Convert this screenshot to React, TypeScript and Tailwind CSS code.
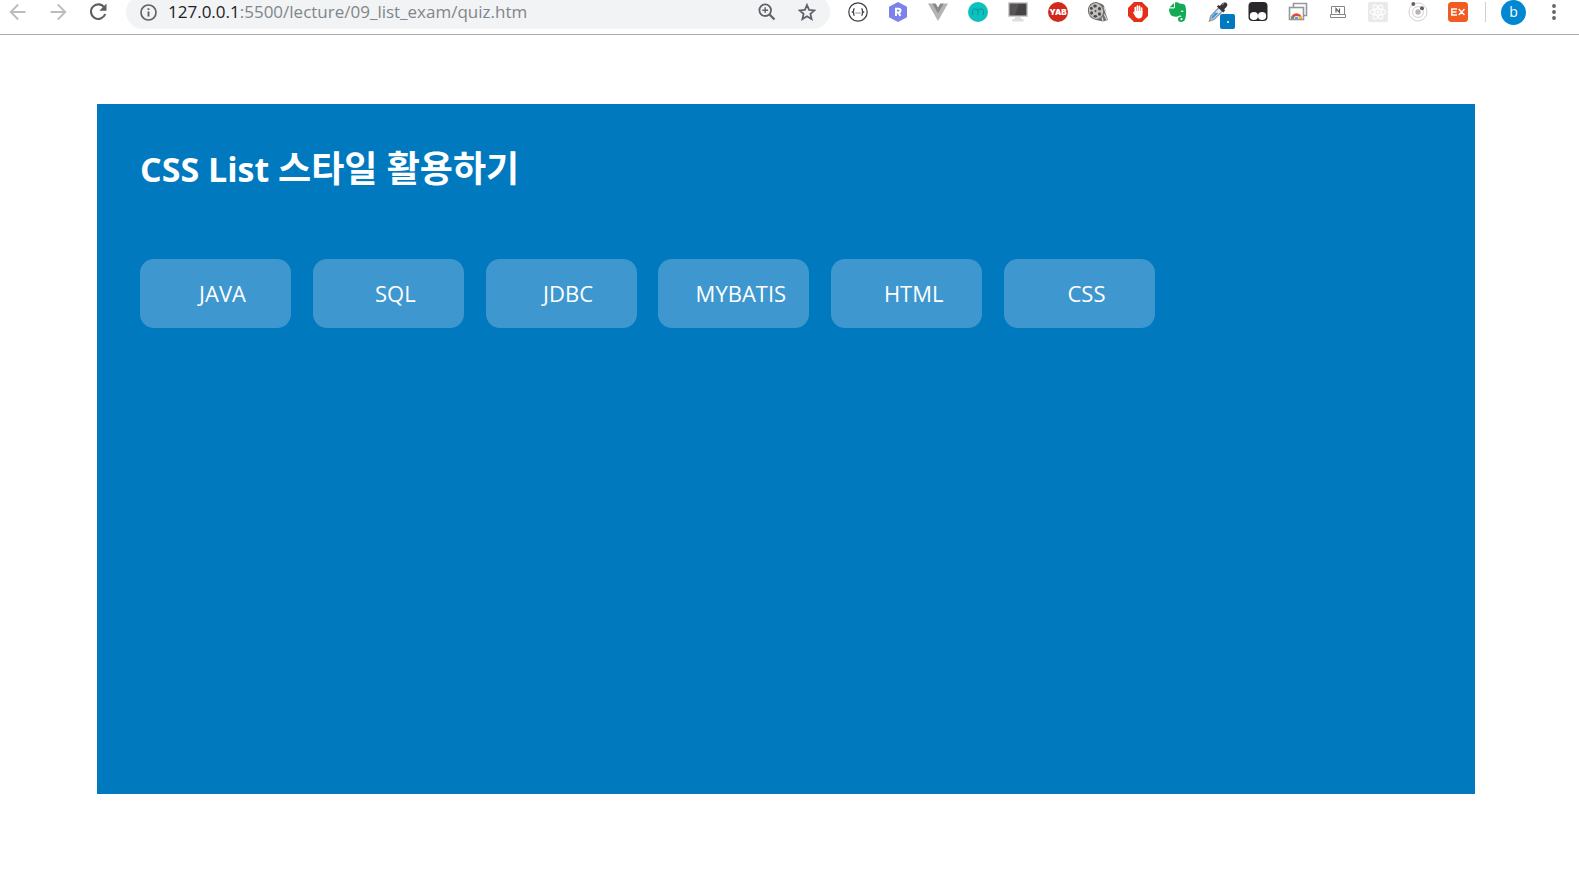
import type { ReactNode } from "react";

const topics = ["JAVA", "SQL", "JDBC", "MYBATIS", "HTML", "CSS"];

function ToolButton({ label, children }: { label: string; children: ReactNode }) {
  return (
    <button type="button" aria-label={label} className="relative flex h-5 w-10 shrink-0 items-center justify-center">
      {children}
    </button>
  );
}

const extensions: { name: string; icon: ReactNode }[] = [
  {
    name: "JSON viewer",
    icon: (
      <svg width="20" height="20" viewBox="0 0 20 20" fill="none" stroke="#3a3c40">
        <circle cx="10" cy="10" r="9.2" strokeWidth="1.2" />
        <path d="M6.6 6.6C5.2 6.6 5.9 8.200 5.500 9.300L4.500 10l1 .7c.4 1.100-.3 2.700 1.100 2.700M13.400 6.600c1.400 0 .7 1.600 1.100 2.700l1 .7-1 .7c-.4 1.100.3 2.700-1.100 2.700" strokeWidth="1.300" />
        <path d="M7.600 11h1M9.500 11h1M11.400 11h1" strokeWidth="1" />
      </svg>
    ),
  },
  {
    name: "Hexagon R",
    icon: (
      <svg width="20" height="20" viewBox="0 0 20 20">
        <path d="M10 0l9 4.8v10.4L10 20l-9-4.8V4.8z" fill="#7b83eb" />
        <path d="M8 14V6.7h2.6a1.9 1.9 0 010 3.8H8M10.4 10.5l2 3.5" fill="none" stroke="#fff" strokeWidth="1.9" />
      </svg>
    ),
  },
  {
    name: "Vue devtools",
    icon: (
      <svg width="20" height="20" viewBox="0 0 20 20">
        <path d="M0 1.500h4L10 12l6-10.500h4L10 19z" fill="#b5b3b4" />
        <path d="M4 1.500h3.700L10 5.500l2.300-4H16L10 12z" fill="#8b898b" />
      </svg>
    ),
  },
  {
    name: "Momentum",
    icon: (
      <svg width="20" height="20" viewBox="0 0 20 20">
        <circle cx="10" cy="10" r="10" fill="#0cc0bd" />
        <path d="M4.500 13V9.500a2.700 2.700 0 015.500 0V13M10 9.500a2.700 2.700 0 015.500 0V13" fill="none" stroke="#0795a8" strokeWidth="1" />
      </svg>
    ),
  },
  {
    name: "Screen",
    icon: (
      <svg width="22" height="20" viewBox="0 0 22 20">
        <rect x="1" y="0" width="20" height="15" rx="1" fill="#d0cfce" />
        <rect x="2.500" y="1.500" width="17" height="12" fill="#464446" />
        <path d="M3 2h9L8 13H3z" fill="#575557" />
        <path d="M8 15h6v2h2.500v2.500h-11V17H8z" fill="#dedddc" />
      </svg>
    ),
  },
  {
    name: "YAB",
    icon: (
      <span className="flex size-5 items-center justify-center overflow-hidden rounded-full bg-[#d02a1f] font-['Inter',sans-serif] text-[8px] font-black text-white">
        YAB
      </span>
    ),
  },
  {
    name: "Film reel",
    icon: (
      <svg width="22" height="20" viewBox="0 0 22 20">
        <path d="M11 1c5 0 8 4 7.500 10l2.500 7-5 1.500L9 18z" fill="#6d6b6a" />
        <path d="M17 12l3 6M15 15l1 4M17 5l2 6" stroke="#d7d4d2" strokeWidth="1.300" />
        <ellipse cx="9" cy="9" rx="7.500" ry="8.500" transform="rotate(-18 9 9)" fill="#c2c0be" stroke="#6d6b6a" />
        <g fill="#4a4848">
          <ellipse cx="8" cy="4" rx="1.800" ry="1.500" />
          <ellipse cx="12.500" cy="6.800" rx="1.600" ry="1.800" />
          <ellipse cx="12.500" cy="12" rx="1.600" ry="1.800" />
          <ellipse cx="8.300" cy="14.300" rx="1.800" ry="1.400" />
          <ellipse cx="4.600" cy="11" rx="1.500" ry="1.800" />
          <ellipse cx="4.400" cy="6.300" rx="1.400" ry="1.500" />
          <circle cx="8.500" cy="9" r="1" />
        </g>
      </svg>
    ),
  },
  {
    name: "Ad blocker",
    icon: (
      <svg width="20" height="20" viewBox="0 0 20 20">
        <path d="M6 0h8l6 6v8l-6 6H6l-6-6V6z" fill="#e4301a" />
        <path d="M7.300 10V5.500M9.400 9V4M11.500 9V4.300M13.600 10V6" stroke="#fff" strokeWidth="1.700" strokeLinecap="round" />
        <path d="M6.500 9h8v3.500c0 2.400-1.500 4-3.600 4-2 0-3.100-1-4-2.700l-2-3.400c.7-.8 1.500-.2 1.900.5z" fill="#fff" />
      </svg>
    ),
  },
  {
    name: "Evernote",
    icon: (
      <svg width="20" height="20" viewBox="0 0 20 20">
        <path d="M7 .6c1.800-.8 3.700-.1 4.300 1 2 .2 5.400.3 6 2.200.9 3 1 7.400.4 11-.5 3.400-1.700 5.200-4.400 5.200-2.500 0-3.500-1.400-3.300-3.200.2-1.700 1.500-2.300 3.500-2-.2-1.500-1.400-1.600-2.300-1-1.800 1.400-5 1-7.100.1C2 12.900 1 9.600 1 6.400h4.500C6.500 6.400 7 5.900 7 5z" fill="#13aa53" />
        <path d="M6 1v4.300H1.600z" fill="#13aa53" />
        <path d="M12.800 9.800c.3-1.800 2.500-1.800 2.800.2-.9-.4-1.900-.4-2.800-.2z" fill="#fff" />
        <path d="M14.500 15.700c-1.700.1-2.200.8-2.100 1.700.1 1 1.600.9 2 .4z" fill="#fff" />
      </svg>
    ),
  },
  {
    name: "Color picker",
    icon: (
      <>
        <svg width="20" height="20" viewBox="0 0 20 20">
          <path d="M11 5.500l3.500 3.500-8.500 8.500-4.500 1.500 1.200-5z" fill="#dbeafb" stroke="#98979c" strokeWidth="1.400" />
          <path d="M7.200 10.500l3.300.5-5 5.200-2.500.9.900-2.900z" fill="#349bea" />
          <path d="M8.800 4.600l1.900-1.500 1.200.8C13.500 1.800 15.800-.5 18.200.8c2.500 1.800.6 4.300-2 6.400l.9 1.300-1.800 2z" fill="#373538" />
          <path d="M14 3l2-1.500" stroke="#97979a" />
        </svg>
        <span className="absolute left-[22px] top-[12px] flex h-[15px] w-[15px] items-center justify-center rounded-[2px] bg-[#0079bf]">
          <span className="size-[2px] bg-[#b3def3]" />
        </span>
      </>
    ),
  },
  {
    name: "User scripts",
    icon: (
      <svg width="20" height="20" viewBox="0 0 20 20">
        <rect x=".5" y="0" width="19" height="19" rx="4" fill="#292729" />
        <circle cx="5.900" cy="14" r="4.100" fill="#fff" />
        <circle cx="14.100" cy="14" r="4.100" fill="#fff" />
      </svg>
    ),
  },
  {
    name: "Remote desktop",
    icon: (
      <svg width="20" height="20" viewBox="0 0 20 20" fill="none">
        <path d="M5.500 5V1.500H18.500v12H15" stroke="#96979d" strokeWidth="1.600" />
        <rect x="1.500" y="5.500" width="14" height="12" fill="#fff" stroke="#96979d" strokeWidth="1.600" />
        <path d="M3 16.700a5.500 5.500 0 0111 0z" fill="#e34b37" />
        <path d="M3 16.700a5.500 5.500 0 01.9-3l2.600 3z" fill="#45a964" />
        <path d="M9.500 14.200h4a5.500 5.500 0 01.5 2.500h-4z" fill="#f3bd36" />
        <path d="M5.900 16.700a2.600 2.600 0 015.200 0z" fill="#fff" />
        <path d="M6.600 16.700a1.900 1.900 0 013.800 0z" fill="#438de8" />
      </svg>
    ),
  },
  {
    name: "Keyboard N",
    icon: (
      <svg width="16" height="14" viewBox="0 0 16 14" fill="none" stroke="#858489">
        <path d="M1.500 1.500h13v8M1.500 1.500v8" />
        <path d="M.5 9.500h15v3H.5z" />
        <path d="M6 7.500V3.500l3.500 4V3.500" stroke="#636167" strokeWidth="1.200" />
      </svg>
    ),
  },
  {
    name: "React devtools",
    icon: (
      <svg width="20" height="20" viewBox="0 0 20 20" fill="none">
        <rect width="20" height="20" rx="2" fill="#ebe8e8" />
        <g stroke="#fff" strokeWidth="1.100">
          <ellipse cx="10" cy="10" rx="8" ry="3.100" />
          <ellipse cx="10" cy="10" rx="8" ry="3.100" transform="rotate(60 10 10)" />
          <ellipse cx="10" cy="10" rx="8" ry="3.100" transform="rotate(120 10 10)" />
        </g>
        <circle cx="10" cy="10" r="1.500" fill="#fff" />
      </svg>
    ),
  },
  {
    name: "Orbit",
    icon: (
      <svg width="20" height="20" viewBox="0 0 20 20" fill="none">
        <circle cx="10" cy="10" r="9" stroke="#d5cfcf" />
        <circle cx="10" cy="10" r="5.500" stroke="#dedada" strokeWidth="1.300" />
        <circle cx="10" cy="10" r="2.700" fill="#b8b4b5" />
        <circle cx="5.300" cy="2" r="1.900" fill="#626064" />
        <circle cx="14" cy="6.200" r="2" fill="#626064" />
      </svg>
    ),
  },
  {
    name: "EX",
    icon: (
      <svg width="20" height="20" viewBox="0 0 20 20" fill="none">
        <rect width="20" height="20" rx="3.500" fill="#f15c22" />
        <path d="M9 7H3.800v6H9M3.800 10H8.500M10.700 7l5.800 6M16.500 7l-5.800 6" stroke="#fff" strokeWidth="1.400" />
      </svg>
    ),
  },
];

function BrowserBar() {
  return (
    <header className="flex h-[35px] items-end overflow-hidden border-b border-[#acacac] bg-white pb-[5px]">
      <nav aria-label="Browser toolbar" className="flex h-[34px] w-full items-center">
        <div className="-ml-0.5 flex w-32 shrink-0">
          <ToolButton label="Back">
            <svg width="18" height="18" viewBox="0 0 18 18" fill="none" stroke="#bbbcbe" strokeWidth="1.800">
              <path d="M16.500 9H2M9.200 1.500L1.700 9l7.500 7.500" />
            </svg>
          </ToolButton>
          <ToolButton label="Forward">
            <svg width="18" height="18" viewBox="0 0 18 18" fill="none" stroke="#bbbcbe" strokeWidth="1.800">
              <path d="M1.500 9H16M8.800 1.500L16.300 9l-7.500 7.500" />
            </svg>
          </ToolButton>
          <ToolButton label="Reload">
            <svg width="18" height="18" viewBox="0 0 18 18" fill="none">
              <path d="M15.300 4.500A7.300 7.300 0 1016.200 11" stroke="#5c5e62" strokeWidth="2.100" />
              <path d="M17.500.5v7.200h-7.200z" fill="#5c5e62" />
            </svg>
          </ToolButton>
        </div>
        <div className="flex h-[34px] min-w-0 flex-1 items-center rounded-full bg-[#f1f3f4] pl-[14px] pr-[3px]">
          <svg className="shrink-0" width="17" height="17" viewBox="0 0 17 17" fill="none" stroke="#5f6368">
            <circle cx="8.500" cy="8.500" r="7.500" strokeWidth="1.700" />
            <path d="M8.500 7.500v5M8.500 4.200V6" strokeWidth="1.900" />
          </svg>
          <a
            href="#quiz"
            className="ml-[11px] min-w-0 flex-1 truncate font-['Open_Sans','Noto_Sans',sans-serif] text-[17px] leading-6 text-[#80868b]"
          >
            <span className="text-[#202124]">127.0.0.1</span>:5500/lecture/09_list_exam/quiz.htm
          </a>
          <ToolButton label="Zoom">
            <svg width="18" height="18" viewBox="0 0 18 18" fill="none" stroke="#5f6368">
              <circle cx="7.200" cy="7.200" r="5.800" strokeWidth="1.800" />
              <path d="M11.500 11.500l5 5" strokeWidth="2.300" />
              <path d="M4.300 7.200h5.800M7.200 4.300v5.800" strokeWidth="1.400" />
            </svg>
          </ToolButton>
          <ToolButton label="Bookmark this page">
            <svg width="18" height="18" viewBox="0 0 18 18" fill="none" stroke="#5f6368" strokeWidth="1.800">
              <path d="M9 2l2.100 4.900 5.300.5-4 3.500 1.200 5.200L9 13.300l-4.600 2.800 1.200-5.200-4-3.500 5.300-.5z" />
            </svg>
          </ToolButton>
        </div>
        <div className="ml-2 flex shrink-0">
          {extensions.map((extension) => (
            <ToolButton key={extension.name} label={extension.name}>
              {extension.icon}
            </ToolButton>
          ))}
        </div>
        <span className="ml-[7px] h-5 w-px shrink-0 bg-[#cfcfd0]" />
        <button
          type="button"
          aria-label="Profile"
          className="ml-[15px] flex size-[25px] shrink-0 items-center justify-center rounded-full bg-[#0288d1] font-['Open_Sans',sans-serif] text-[14px] leading-4 text-white"
        >
          b
        </button>
        <button type="button" aria-label="Menu" className="ml-[18px] mr-[16px] flex h-5 w-[19px] shrink-0 items-center justify-center">
          <svg width="4" height="16" viewBox="0 0 4 16" fill="#5f6368">
            <circle cx="2" cy="2" r="1.900" />
            <circle cx="2" cy="8" r="1.900" />
            <circle cx="2" cy="14" r="1.900" />
          </svg>
        </button>
      </nav>
    </header>
  );
}

export default function App() {
  return (
    <div className="min-h-screen bg-white">
      <BrowserBar />
      <main className="pb-[86px] pl-[97px] pr-[104px] pt-[69px]">
        <section className="min-h-[690px] bg-[#0079bf] px-[43px] pt-[42px] font-['Open_Sans','Noto_Sans_CJK_KR',sans-serif] text-white">
          <h1 className="h-[46px] text-[34px] font-bold leading-[46px]">
            CSS List <span className="text-[36px]">스타일 활용하기</span>
          </h1>
          <ul className="mt-[67px] flex max-w-[1015px] justify-between">
            {topics.map((topic) => (
              <li
                key={topic}
                className="flex h-[69px] w-[151px] items-center justify-center rounded-[14px] bg-[#3e97cf] pb-0.5 pl-[14px] text-[22px] leading-8"
              >
                {topic}
              </li>
            ))}
          </ul>
        </section>
      </main>
    </div>
  );
}
